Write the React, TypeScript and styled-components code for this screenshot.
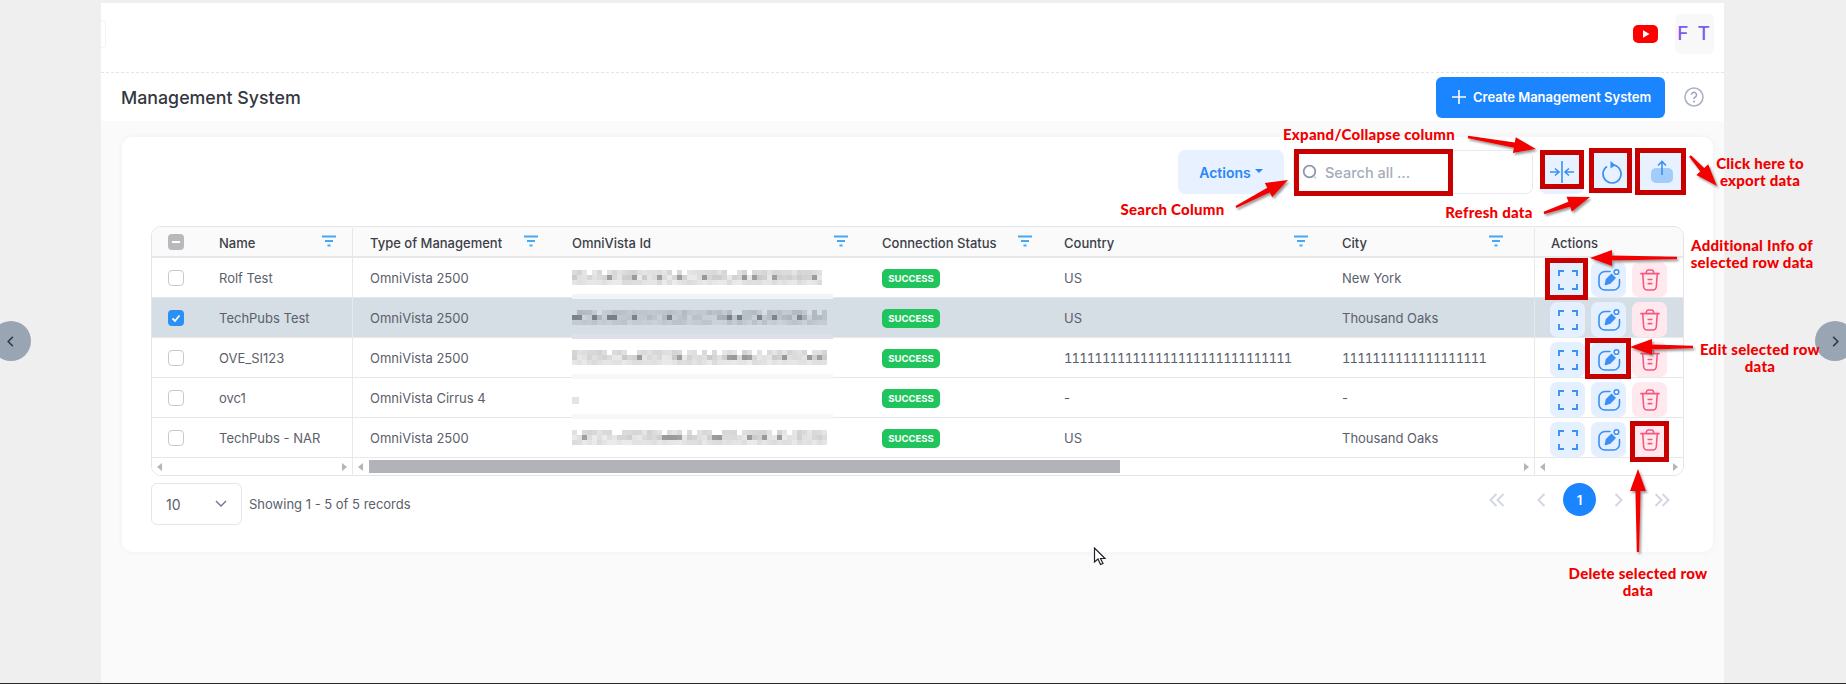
import React from "react";
import styled, { createGlobalStyle } from "styled-components";

const Global = createGlobalStyle`
  html, body { margin: 0; width: 1846px; height: 684px; overflow: hidden; background: #efefef; }
  body { font-family: Inter, "Liberation Sans", sans-serif; }
  * { box-sizing: border-box; }
`;

const Page = styled.div`
  position: relative;
  width: 1846px;
  height: 684px;
  padding: 3px 122px 0 101px;
  border-bottom: 1px solid #2a2a2a;
  overflow: hidden;
`;
const Main = styled.main`
  display: flex;
  flex-direction: column;
  height: 100%;
  background: #fafafa;
`;
const Header = styled.header`
  display: flex;
  align-items: center;
  height: 70px;
  padding: 0 10px 8px 0;
  background: #fff;
  border-bottom: 1px dashed #e2e5ee;
`;
const HeaderStub = styled.div`
  width: 5px;
  height: 28px;
  margin-right: auto;
  border: 1px solid #f3f3f3;
  border-left: 0;
  border-radius: 0 4px 4px 0;
`;
const Avatar = styled.div`
  display: flex;
  align-items: center;
  justify-content: center;
  width: 39px;
  height: 40px;
  margin-left: 17px;
  border-radius: 6px;
  background: #f8f8f9;
  color: #7b5cf0;
  font-size: 19px;
  font-weight: 500;
  letter-spacing: 2px;
`;
const TitleBar = styled.div`
  display: flex;
  align-items: center;
  height: 48px;
  padding: 0 20px 0 20px;
  background: #fff;
`;
const Title = styled.h1`
  margin: 0 auto 0 0;
  font-size: 17.8px;
  font-weight: 500;
  color: #33373f;
`;
const CreateButton = styled.button`
  display: flex;
  align-items: center;
  gap: 6px;
  width: 229px;
  height: 41px;
  padding: 0 0 0 15px;
  border: 0;
  border-radius: 6px;
  background: #1a85ff;
  color: #fff;
  font: 600 13px Inter, sans-serif;
`;
const HelpSlot = styled.div`
  display: flex;
  margin-left: 19px;
`;
const Content = styled.div`
  padding: 16px 11px 0 21px;
`;
const Card = styled.section`
  height: 415px;
  padding: 13px 29px 0 29px;
  border-radius: 10px;
  background: #fff;
  box-shadow: 0 0 6px rgba(60, 60, 80, 0.05);
`;
const Toolbar = styled.div`
  display: flex;
  justify-content: flex-end;
  height: 44px;
  margin-bottom: 32px;
`;
const ActionsButton = styled.button`
  display: flex;
  align-items: center;
  justify-content: center;
  gap: 4px;
  width: 106px;
  height: 44px;
  margin-right: 9px;
  border: 0;
  border-radius: 7px;
  background: #e7f1ff;
  color: #2b86f5;
  font: 600 14px Inter, sans-serif;
`;
const Caret = styled.span`
  width: 0;
  height: 0;
  margin-top: -2px;
  border-left: 4px solid transparent;
  border-right: 4px solid transparent;
  border-top: 4px solid #2b86f5;
`;
const SearchBox = styled.div`
  display: flex;
  align-items: center;
  gap: 7px;
  width: 240px;
  height: 44px;
  margin-right: 7px;
  padding-left: 8px;
  border: 1px solid #e8eaf0;
  border-radius: 7px;
  color: #a5abbb;
  font-size: 14.5px;
  font-weight: 500;
`;
const ToolButton = styled.button`
  display: flex;
  align-items: center;
  justify-content: center;
  width: 44px;
  height: 44px;
  margin-left: ${(p: { $first?: boolean }) => (p.$first ? 0 : 6)}px;
  padding: 0;
  border: 0;
  border-radius: 7px;
  background: #e7f1ff;
`;
const TableFrame = styled.div`
  width: 1533px;
  height: 250px;
  border: 1px solid #e4e5e8;
  border-radius: 10px;
  overflow: hidden;
`;
const COLS = "201px 202px 310px 182px 278px 209px 149px";
const Row = styled.div<{ $selected?: boolean; $head?: boolean }>`
  display: grid;
  grid-template-columns: ${COLS};
  height: ${(p) => (p.$head ? 31 : 40)}px;
  padding-top: ${(p) => (p.$head ? 1 : 0)}px;
  background: ${(p) => (p.$selected ? "#d5dde5" : p.$head ? "#fafafa" : "#fff")};
  border-bottom: ${(p) => (p.$head ? 2 : 1)}px solid #e7e8ea;
  font-size: 13px;
  color: ${(p) => (p.$head ? "#3c4048" : "#5b606b")};
  font-weight: ${(p) => (p.$head ? 500 : 400)};
`;
const Cell = styled.div<{ $divider?: boolean; $rp?: number; $tnum?: boolean }>`
  position: relative;
  display: flex;
  align-items: center;
  justify-content: space-between;
  min-width: 0;
  padding: 1px ${(p) => p.$rp ?? 17}px 0 17px;
  white-space: nowrap;
  border-right: ${(p) => (p.$divider ? "1px solid #e7e8ea" : "0")};
  ${(p) => (p.$tnum ? "font-variant-numeric: tabular-nums; letter-spacing: -0.85px;" : "")}
`;
const NameCell = styled(Cell)`
  justify-content: flex-start;
  padding-left: 16px;
  padding-right: 16px;
`;
const NameText = styled.span`
  margin-left: 35px;
  margin-right: auto;
`;
const ActionsCell = styled(Cell)`
  justify-content: flex-start;
  align-items: flex-end;
  gap: 6px;
  padding: 0 0 0 15px;
  border-left: 1px solid #e7e8ea;
`;
const ActionsHead = styled(Cell)`
  justify-content: flex-start;
  padding-left: 16px;
  border-left: 1px solid #e7e8ea;
`;
const CheckBox = styled.span<{ $tone?: "on" | "mixed" }>`
  display: flex;
  align-items: center;
  justify-content: center;
  width: 16px;
  height: 16px;
  flex: none;
  margin-top: -1px;
  border-radius: 4px;
  border: ${(p) => (p.$tone ? "0" : "1px solid #c6c9cf")};
  background: ${(p) => (p.$tone === "on" ? "#2b90f5" : p.$tone === "mixed" ? "#b7b9bd" : "#fff")};
`;
const Badge = styled.span`
  display: inline-flex;
  align-items: center;
  justify-content: center;
  width: 58px;
  height: 19px;
  border-radius: 5px;
  background: #1fc55c;
  color: #fff;
  font-size: 9.5px;
  font-weight: 700;
`;
const IconButton = styled.span<{ $danger?: boolean }>`
  display: flex;
  align-items: center;
  justify-content: center;
  width: 35px;
  height: 35px;
  border-radius: 7px;
  background: ${(p) => (p.$danger ? "#ffe9ef" : "#e4f0ff")};
`;
const ScrollRow = styled.div`
  display: grid;
  grid-template-columns: 201px 1181px 149px;
  height: 17px;
  background: #fff;
`;
const ScrollSeg = styled.div<{ $left?: boolean; $right?: boolean }>`
  display: flex;
  align-items: center;
  justify-content: space-between;
  padding: 0 5px;
  border-right: ${(p) => (p.$left ? "1px solid #e7e8ea" : "0")};
  border-left: ${(p) => (p.$right ? "1px solid #e7e8ea" : "0")};
`;
const Tri = styled.span<{ $dir: "l" | "r" }>`
  width: 0;
  height: 0;
  border-top: 4px solid transparent;
  border-bottom: 4px solid transparent;
  ${(p) => (p.$dir === "l" ? "border-right: 5px solid #b3b5ba;" : "border-left: 5px solid #b3b5ba;")}
`;
const Thumb = styled.div`
  width: 751px;
  height: 13px;
  margin-left: 6px;
  margin-right: auto;
  background: #b1b3b8;
`;
const Footer = styled.div`
  display: flex;
  align-items: flex-start;
  margin-top: 7px;
  width: 1533px;
`;
const PageSize = styled.div`
  display: flex;
  align-items: center;
  justify-content: space-between;
  width: 91px;
  height: 42px;
  padding: 0 14px;
  border: 1px solid #e3e6ee;
  border-radius: 6px;
  color: #5b606b;
  font-size: 14px;
`;
const Records = styled.span`
  margin: 13px auto 0 7px;
  font-size: 13px;
  color: #5b606b;
`;
const Pager = styled.nav`
  display: flex;
  align-items: center;
  height: 33px;
  margin-right: 0;
`;
const PagerSlot = styled.span<{ $w: number }>`
  display: flex;
  justify-content: center;
  width: ${(p) => p.$w}px;
`;
const PageNumber = styled.span`
  display: flex;
  align-items: center;
  justify-content: center;
  width: 33px;
  height: 33px;
  border-radius: 50%;
  background: #1a85ff;
  color: #fff;
  font-size: 13px;
  font-weight: 600;
`;
const SideNav = styled.div<{ $side: "l" | "r" }>`
  position: absolute;
  top: 321px;
  ${(p) => (p.$side === "l" ? "left: -9px; justify-content: flex-end; padding-right: 17px;" : "left: 1815px; padding-left: 17px;")}
  display: flex;
  align-items: center;
  width: 40px;
  height: 40px;
  border-radius: 50%;
  background: #9aa5b3;
`;
const Overlay = styled.svg`
  position: absolute;
  left: 0;
  top: 0;
  pointer-events: none;
`;
const RedBox = styled.div<{ $x: number; $y: number; $w: number; $h: number; $b?: number }>`
  position: absolute;
  left: ${(p) => p.$x}px;
  top: ${(p) => p.$y}px;
  width: ${(p) => p.$w}px;
  height: ${(p) => p.$h}px;
  border: ${(p) => p.$b ?? 5}px solid #c80000;
`;
const Note = styled.div<{ $x: number; $y: number; $w: number }>`
  position: absolute;
  left: ${(p) => p.$x}px;
  top: ${(p) => p.$y}px;
  width: ${(p) => p.$w}px;
  text-align: center;
  font-family: Lato, "Liberation Sans", sans-serif;
  font-size: 15px;
  font-weight: 900;
  letter-spacing: 0.25px;
  line-height: 17px;
  color: #f00000;
  white-space: nowrap;
`;
const Cursor = styled.svg`
  position: absolute;
  left: 1093px;
  top: 547px;
`;
const FilterSvg = styled.svg`
  margin-top: -4px;
  flex: none;
`;

const BLUE = "#3b90f3";

const FilterIcon = () => (
  <FilterSvg width="14" height="12" viewBox="0 0 14 12">
    <rect x="0" y="0.5" width="14" height="2" fill="#45a8f5" />
    <rect x="3" y="5" width="8" height="2" fill="#45a8f5" />
    <rect x="5.5" y="9.5" width="3" height="2" fill="#45a8f5" />
  </FilterSvg>
);
const ExpandIcon = () => (
  <svg width="20" height="20" viewBox="0 0 20 20" fill="none" stroke={BLUE} strokeWidth="1.9">
    <path d="M1 6V1h5M14 1h5v5M19 14v5h-5M6 19H1v-5" />
  </svg>
);
const EditIcon = () => (
  <svg width="24" height="24" viewBox="0 0 24 24" fill="none" stroke={BLUE} strokeWidth="1.6" strokeLinecap="round">
    <path d="M13 3.500H8a6 6 0 0 0-6 6v6.500a6 6 0 0 0 6 6h8.500a6 6 0 0 0 6-6v-4.500" />
    <path d="M8.500 16.500l1-5 5-5 3.500 3.500-5 5z" fill={BLUE} strokeLinejoin="round" />
    <circle cx="19.500" cy="4" r="2.300" fill="#fff" />
  </svg>
);
const TrashIcon = () => (
  <svg width="20" height="22" viewBox="0 0 22 24" fill="none" stroke="#f6577d" strokeWidth="1.7" strokeLinecap="round">
    <path d="M1 5h20M7 5V3.500A2.500 2.500 0 0 1 9.500 1h3A2.500 2.500 0 0 1 15 3.500V5" />
    <path d="M3 5l1 14a4 4 0 0 0 4 4h6a4 4 0 0 0 4-4l1-14" />
    <path d="M9 11.500h4M9 16h4" />
  </svg>
);
const CollapseIcon = () => (
  <svg width="26" height="24" viewBox="0 0 26 24" fill="none" stroke={BLUE} strokeWidth="1.6">
    <path d="M13 1v22" />
    <path d="M1 12h8M6 8.500l4 3.500-4 3.500M25 12h-8M20 8.500L16 12l4 3.500" />
  </svg>
);
const RefreshIcon = () => (
  <svg width="22" height="24" viewBox="0 0 22 24" fill="none" stroke={BLUE} strokeWidth="1.7">
    <path d="M13 5.200A9 9 0 1 1 6 6.500" />
    <path d="M9.500 1l5 4.200-5 3.300z" fill={BLUE} stroke="none" />
  </svg>
);
const ExportIcon = () => (
  <svg width="22" height="24" viewBox="0 0 22 24" fill="none">
    <rect x="0" y="8" width="22" height="15" rx="5" fill="#a2cdfb" />
    <path d="M11 15V2M7 5.500L11 1.500l4 4" stroke={BLUE} strokeWidth="1.6" />
  </svg>
);
const SearchIcon = () => (
  <svg width="16" height="16" viewBox="0 0 16 16" fill="none" stroke="#8f96a8" strokeWidth="1.800">
    <circle cx="7.500" cy="7.500" r="5.800" />
    <path d="M12 12.500l2 2" stroke="#d5d8e0" />
  </svg>
);
const HelpIcon = () => (
  <svg width="20" height="20" viewBox="0 0 20 20" fill="none">
    <circle cx="10" cy="10" r="9" stroke="#adb1c7" strokeWidth="1.600" />
    <path d="M7.500 7.800a2.500 2.500 0 1 1 3.800 2.100c-.9.600-1.300 1-1.300 2" stroke="#9da1b8" strokeWidth="1.500" />
    <circle cx="10" cy="14.500" r="1" fill="#9da1b8" />
  </svg>
);
const YouTubeIcon = () => (
  <svg width="25" height="18" viewBox="0 0 25 18">
    <rect width="25" height="18" rx="5" fill="#f00" />
    <path d="M10 5.200l6.500 3.800-6.500 3.800z" fill="#fff" />
  </svg>
);
const Chevron = ({ dir, color = "#d3d7e3", double, small }: { dir: "l" | "r"; color?: string; double?: boolean; small?: boolean }) => (
  <svg
    width={double ? 16 : small ? 7 : 9}
    height={small ? 11 : 14}
    viewBox={double ? "0 0 16 14" : "0 0 9 14"}
    fill="none"
    stroke={color}
    strokeWidth="2"
  >
    <g transform={dir === "r" ? `translate(${double ? 16 : 9},0) scale(-1,1)` : undefined}>
      <path d="M7.500 1L1.500 7l6 6" />
      {double && <path d="M14.500 1l-6 6 6 6" />}
    </g>
  </svg>
);
const Down = () => (
  <svg width="12" height="8" viewBox="0 0 12 8" fill="none" stroke="#6d7690" strokeWidth="1.400">
    <path d="M1 1l5 5 5-5" />
  </svg>
);

function Mosaic({ seed, width, tone }: { seed: number; width: number; tone: "light" | "dark" }) {
  const cols = Math.floor(width / 5);
  const cells: React.ReactNode[] = [];
  let s = seed;
  const rnd = () => {
    s = (s * 9301 + 49297) % 233280;
    return s / 233280;
  };
  const base = tone === "dark" ? [204, 210, 218] : [236, 236, 236];
  for (let r = 0; r < 3; r++) {
    for (let c = 0; c < cols; c++) {
      const v = rnd();
      const drop = (r === 0 ? 26 : r === 1 ? 44 : 18) * v + (r === 1 && v > 0.8 ? 40 : 0);
      const sh = `rgb(${base[0] - drop},${base[1] - drop},${base[2] - drop})`;
      if (r === 0 && v < 0.22) continue;
      cells.push(<rect key={`${r}-${c}`} x={c * 5} y={r * 5} width="5" height="5" fill={sh} />);
    }
  }
  return (
    <svg width={width} height="15" viewBox={`0 0 ${width} 15`} shapeRendering="crispEdges">
      {cells}
    </svg>
  );
}

const IdWrap = styled.div<{ $band: string }>`
  position: absolute;
  left: 17px;
  top: 0;
  bottom: 0;
  width: 261px;
  display: flex;
  align-items: center;
  &::after {
    content: "";
    position: absolute;
    left: 0;
    right: 0;
    bottom: -2px;
    height: 5px;
    background: ${(p) => p.$band};
    z-index: 1;
  }
`;
const DotMark = styled.span`
  width: 7px;
  height: 7px;
  margin-top: 6px;
  background: #e4e4e4;
`;

const rows = [
  { name: "Rolf Test", type: "OmniVista 2500", seed: 11, w: 253, country: "US", city: "New York", band: "#f3f4f6" },
  { name: "TechPubs Test", type: "OmniVista 2500", seed: 47, w: 258, country: "US", city: "Thousand Oaks", selected: true, band: "#dde1e7" },
  { name: "OVE_SI123", type: "OmniVista 2500", seed: 93, w: 258, country: "111111111111111111111111111111", city: "1111111111111111111", tnum: true, band: "#f7f7f8" },
  { name: "ovc1", type: "OmniVista Cirrus 4", seed: 0, w: 0, country: "-", city: "-", band: "#f7f7f8" },
  { name: "TechPubs - NAR", type: "OmniVista 2500", seed: 131, w: 258, country: "US", city: "Thousand Oaks", band: "transparent" },
];

type Pt = [number, number];
function Arrow({ from, to }: { from: Pt; to: Pt }) {
  const dx = to[0] - from[0];
  const dy = to[1] - from[1];
  const len = Math.hypot(dx, dy);
  const ux = dx / len;
  const uy = dy / len;
  const nx = -uy;
  const ny = ux;
  const head = 22;
  const at = (d: number, w: number): string => `${from[0] + ux * d + nx * w},${from[1] + uy * d + ny * w}`;
  const pts = [at(0, 1.2), at(len - head, 2.6), at(len - head, 8), at(len, 0), at(len - head, -8), at(len - head, -2.6), at(0, -1.2)].join(" ");
  return <polygon points={pts} fill="#f30000" filter="url(#arrowShadow)" />;
}

export default function App() {
  return (
    <Page>
      <Global />
      <Main>
        <Header>
          <HeaderStub />
          <YouTubeIcon />
          <Avatar>F T</Avatar>
        </Header>
        <TitleBar>
          <Title>Management System</Title>
          <CreateButton>
            <svg width="16" height="16" viewBox="0 0 16 16" stroke="#fff" strokeWidth="1.600">
              <path d="M8 1v14M1 8h14" />
            </svg>
            Create Management System
          </CreateButton>
          <HelpSlot>
            <HelpIcon />
          </HelpSlot>
        </TitleBar>
        <Content>
          <Card>
            <Toolbar>
              <ActionsButton>
                Actions <Caret />
              </ActionsButton>
              <SearchBox>
                <SearchIcon />
                Search all ...
              </SearchBox>
              <ToolButton $first>
                <CollapseIcon />
              </ToolButton>
              <ToolButton>
                <RefreshIcon />
              </ToolButton>
              <ToolButton>
                <ExportIcon />
              </ToolButton>
            </Toolbar>
            <TableFrame>
              <Row $head>
                <NameCell $divider>
                  <CheckBox $tone="mixed">
                    <svg width="10" height="10" viewBox="0 0 10 10" stroke="#fff" strokeWidth="2.200">
                      <path d="M1 5h8" />
                    </svg>
                  </CheckBox>
                  <NameText>Name</NameText>
                  <FilterIcon />
                </NameCell>
                <Cell>
                  Type of Management <FilterIcon />
                </Cell>
                <Cell>
                  OmniVista Id <FilterIcon />
                </Cell>
                <Cell $rp={15}>
                  Connection Status <FilterIcon />
                </Cell>
                <Cell>
                  Country <FilterIcon />
                </Cell>
                <Cell $rp={31}>
                  City <FilterIcon />
                </Cell>
                <ActionsHead>Actions</ActionsHead>
              </Row>
              {rows.map((r) => (
                <Row key={r.name} $selected={r.selected}>
                  <NameCell $divider>
                    <CheckBox $tone={r.selected ? "on" : undefined}>
                      {r.selected && (
                        <svg width="12" height="12" viewBox="0 0 12 12" fill="none" stroke="#fff" strokeWidth="1.800">
                          <path d="M2.500 6.500l2.500 2.500 4.500-5.500" />
                        </svg>
                      )}
                    </CheckBox>
                    <NameText>{r.name}</NameText>
                  </NameCell>
                  <Cell>{r.type}</Cell>
                  <Cell>
                    <IdWrap $band={r.band}>
                      {r.w > 0 ? <Mosaic seed={r.seed} width={r.w} tone={r.selected ? "dark" : "light"} /> : <DotMark />}
                    </IdWrap>
                  </Cell>
                  <Cell>
                    <Badge>SUCCESS</Badge>
                  </Cell>
                  <Cell $tnum={r.tnum}>{r.country}</Cell>
                  <Cell $tnum={r.tnum}>{r.city}</Cell>
                  <ActionsCell>
                    <IconButton>
                      <ExpandIcon />
                    </IconButton>
                    <IconButton>
                      <EditIcon />
                    </IconButton>
                    <IconButton $danger>
                      <TrashIcon />
                    </IconButton>
                  </ActionsCell>
                </Row>
              ))}
              <ScrollRow>
                <ScrollSeg $left>
                  <Tri $dir="l" />
                  <Tri $dir="r" />
                </ScrollSeg>
                <ScrollSeg>
                  <Tri $dir="l" />
                  <Thumb />
                  <Tri $dir="r" />
                </ScrollSeg>
                <ScrollSeg $right>
                  <Tri $dir="l" />
                  <Tri $dir="r" />
                </ScrollSeg>
              </ScrollRow>
            </TableFrame>
            <Footer>
              <PageSize>
                10 <Down />
              </PageSize>
              <Records>Showing 1 - 5 of 5 records</Records>
              <Pager>
                <PagerSlot $w={44}>
                  <Chevron dir="l" double />
                </PagerSlot>
                <PagerSlot $w={44}>
                  <Chevron dir="l" />
                </PagerSlot>
                <PageNumber>1</PageNumber>
                <PagerSlot $w={44}>
                  <Chevron dir="r" />
                </PagerSlot>
                <PagerSlot $w={44}>
                  <Chevron dir="r" double />
                </PagerSlot>
              </Pager>
            </Footer>
          </Card>
        </Content>
      </Main>

      <SideNav $side="l">
        <Chevron dir="l" color="#2f3b4a" small />
      </SideNav>
      <SideNav $side="r">
        <Chevron dir="r" color="#2f3b4a" small />
      </SideNav>

      <RedBox $x={1294} $y={149} $w={159} $h={47} />
      <RedBox $x={1540} $y={150} $w={44} $h={39} />
      <RedBox $x={1589} $y={148} $w={43} $h={45} />
      <RedBox $x={1635} $y={148} $w={51} $h={47} />
      <RedBox $x={1545} $y={258} $w={43} $h={42} />
      <RedBox $x={1585} $y={338} $w={46} $h={41} />
      <RedBox $x={1630} $y={421} $w={39} $h={41} />

      <Overlay width="1846" height="684">
        <defs>
          <filter id="arrowShadow" x="-30%" y="-30%" width="160%" height="160%" filterUnits="objectBoundingBox">
            <feDropShadow dx="1.500" dy="2" stdDeviation="1.200" floodColor="#555" floodOpacity="0.6" />
          </filter>
        </defs>
        <Arrow from={[1468, 137]} to={[1536, 149]} />
        <Arrow from={[1236, 207]} to={[1288, 180]} />
        <Arrow from={[1544, 213]} to={[1590, 197]} />
        <Arrow from={[1690, 156]} to={[1717, 186]} />
        <Arrow from={[1677, 258]} to={[1590, 258]} />
        <Arrow from={[1693, 347]} to={[1630, 347]} />
        <Arrow from={[1638, 552]} to={[1638, 469]} />
      </Overlay>

      <Note $x={1269} $y={126} $w={200}>Expand/Collapse column</Note>
      <Note $x={1100} $y={201} $w={145}>Search Column</Note>
      <Note $x={1424} $y={204} $w={130}>Refresh data</Note>
      <Note $x={1700} $y={155} $w={120}>Click here to<br />export data</Note>
      <Note $x={1672} $y={237} $w={160}>Additional Info of<br />selected row data</Note>
      <Note $x={1680} $y={341} $w={160}>Edit selected row<br />data</Note>
      <Note $x={1558} $y={565} $w={160}>Delete selected row<br />data</Note>

      <Cursor width="14" height="20" viewBox="0 0 14 20">
        <path d="M1.500 1v14l3.500-3 2.500 5.500 2.500-1L7.500 11.500H12z" fill="#fff" stroke="#23232b" strokeWidth="1.200" />
      </Cursor>
    </Page>
  );
}
